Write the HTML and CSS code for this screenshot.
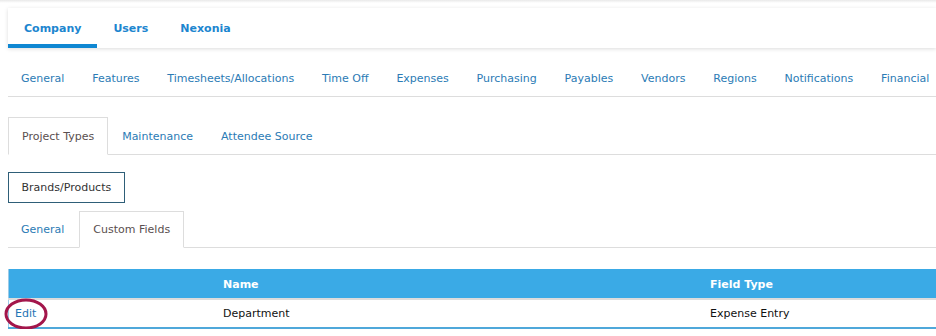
FILE: index.html
```html
<!DOCTYPE html>
<html lang="en">
<head>
  <meta charset="UTF-8" />
  <title>Company Settings</title>
  <link rel="stylesheet" href="styles.css">
</head>
<body>

  <div class="top-nav">
    <a class="top-tab active">Company</a>
    <a class="top-tab">Users</a>
    <a class="top-tab">Nexonia</a>
  </div>

  <div class="sub-nav">
    <a>General</a>
    <a>Features</a>
    <a>Timesheets/Allocations</a>
    <a>Time Off</a>
    <a>Expenses</a>
    <a>Purchasing</a>
    <a>Payables</a>
    <a>Vendors</a>
    <a>Regions</a>
    <a>Notifications</a>
    <a>Financial</a>
  </div>

  <div class="tabs tabs-project">
    <a class="tab active">Project Types</a>
    <a class="tab">Maintenance</a>
    <a class="tab">Attendee Source</a>
  </div>

  <div class="btn-row">
    <button class="btn-outline">Brands/Products</button>
  </div>

  <div class="tabs tabs-fields">
    <a class="tab">General</a>
    <a class="tab active">Custom Fields</a>
  </div>

  <table class="grid">
    <thead>
      <tr>
        <th class="col-action"></th>
        <th class="col-name">Name</th>
        <th>Field Type</th>
      </tr>
    </thead>
    <tbody>
      <tr>
        <td class="col-action">
          <a class="edit-link">Edit</a>
          <!-- annotation ring -->
          <svg class="ring" width="48" height="34" viewBox="0 0 48 34">
            <ellipse cx="22" cy="16" rx="20" ry="14" fill="none" stroke="#a3164b" stroke-width="3"/>
          </svg>
        </td>
        <td class="col-name">Department</td>
        <td>Expense Entry</td>
      </tr>
    </tbody>
  </table>

</body>
</html>
```

FILE: styles.css
```css
html, body {
  margin: 0;
  padding: 0;
  background: #fff;
  overflow: hidden;
}

body {
  padding: 8px 0 0 8px;
  font-family: "DejaVu Sans", Verdana, sans-serif;
  font-size: 11px;
  color: #222;
  background: linear-gradient(#e9e9e9, #fff 3px) no-repeat;
}

a {
  cursor: pointer;
}

/* Top navigation */
.top-nav {
  display: flex;
  height: 40px;
  background: #fff;
  box-shadow: 0 1px 4px rgba(0, 0, 0, 0.14);
}

.top-tab {
  display: flex;
  align-items: center;
  padding: 4px 16px 0;
  font-weight: bold;
  color: #1d86cf;
  border-bottom: 4px solid transparent;
}

.top-tab.active {
  border-bottom-color: #0f87d2;
}

/* Second-level navigation */
.sub-nav {
  display: flex;
  height: 36px;
  margin-top: 12px;
  border-bottom: 1px solid #ddd;
}

.sub-nav a {
  display: flex;
  align-items: center;
  padding: 0 14px 0 13.8px;
  color: #2b7bb5;
  white-space: nowrap;
}

.sub-nav a:first-child {
  padding-left: 13px;
}

/* Bordered tabs */
.tabs {
  display: flex;
  border-bottom: 1px solid #ddd;
}

.tabs-project {
  margin-top: 20px;
  height: 37px;
}

.tabs-project .tab {
  padding-top: 1px;
}

.tabs-fields {
  margin-top: 8px;
  height: 36px;
}

.tab {
  display: flex;
  align-items: center;
  padding: 0 13px;
  margin-bottom: -1px;
  border: 1px solid transparent;
  color: #2b7bb5;
  white-space: nowrap;
}

.tab.active {
  border-color: #ddd;
  border-bottom-color: #fff;
  background: #fff;
  color: #5a4f50;
}

.tabs-fields .tab:first-child {
  padding: 0 14px 0 12px;
}

/* Button */
.btn-row {
  margin-top: 17px;
}

.btn-outline {
  height: 31px;
  padding: 0 12.5px;
  border: 1px solid #2e5e78;
  background: #fff;
  font-family: inherit;
  font-size: 11px;
  color: #333;
  border-radius: 0;
}

/* Table */
.grid {
  margin-top: 21px;
  width: calc(100% + 20px);
  border-collapse: collapse;
  border-left: 1px solid #9ccbe8;
}

.grid th {
  height: 28px;
  padding: 1px 6px 0;
  text-align: left;
  background: #3aaae6;
  color: #fff;
  font-weight: bold;
  border-bottom: 2px solid #dcdcdc;
}

.grid td {
  height: 27px;
  padding: 0 6px;
  color: #111;
  border-bottom: 2px solid #4fa8da;
}

.col-action {
  width: 196px;
  position: relative;
}

.col-name {
  width: 475px;
}

.edit-link {
  color: #1f74b5;
}

.ring {
  position: absolute;
  left: -5px;
  top: -2px;
  pointer-events: none;
}
```
